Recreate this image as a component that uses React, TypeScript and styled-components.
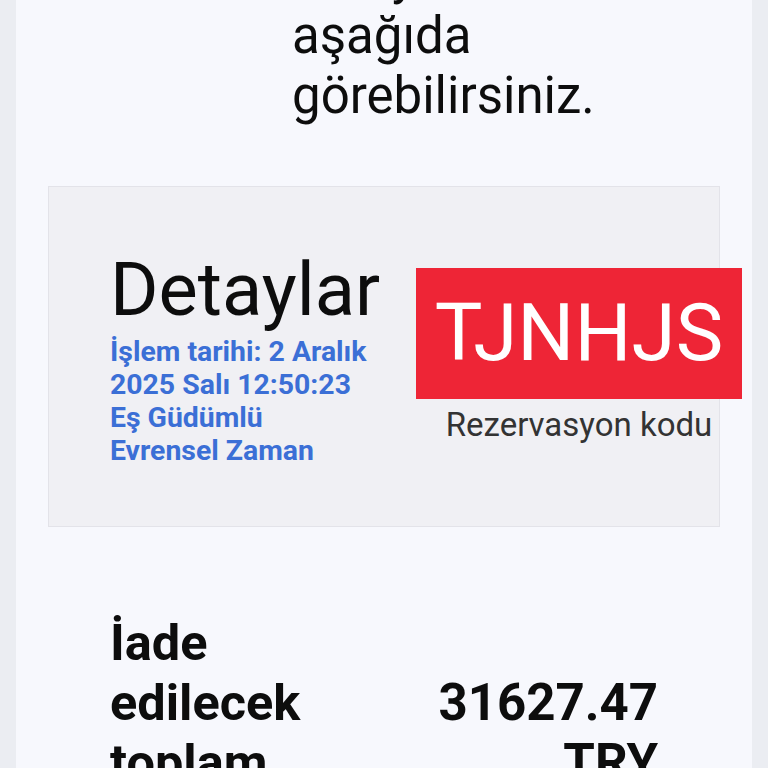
import React from "react";
import styled, { createGlobalStyle } from "styled-components";

const GlobalStyle = createGlobalStyle`
  html, body {
    margin: 0;
    padding: 0;
    background: #ebedf2;
    font-family: Roboto, "Noto Sans", "Liberation Sans", sans-serif;
  }
  * { box-sizing: border-box; }
`;

const Panel = styled.main`
  margin: 0 16px;
  min-height: 100vh;
  background: #f7f8fd;
  display: flow-root;
`;

const Content = styled.div`
  padding: 0 32px;
  margin-top: -114px;
`;

const Message = styled.p`
  margin: 0;
  padding-left: 244px;
  width: 604px;
  font-size: 51px;
  line-height: 60px;
  font-weight: 400;
  color: #0d0d0d;
`;

const Card = styled.section`
  margin-top: 60px;
  display: flex;
  align-items: center;
  gap: 36px;
  padding: 58px 0 59px 61px;
  background: #f0f0f4;
  border: 1px solid #e3e3e9;
`;

const DetailsBlock = styled.div`
  width: 270px;
  flex-shrink: 0;
`;

const DetailsTitle = styled.h2`
  margin: 0;
  font-size: 74px;
  line-height: 90px;
  font-weight: 400;
  color: #0d0d0d;
`;

const DateLine = styled.span`
  display: block;
  font-size: 28.4px;
  line-height: 33px;
  font-weight: 700;
  color: #3b6fd6;
  white-space: nowrap;
`;

const CodeBlock = styled.div`
  flex-shrink: 0;
  width: 326px;
  display: flex;
  flex-direction: column;
  align-items: center;
`;

const CodeBox = styled.div`
  width: 100%;
  height: 131px;
  background: #ee2536;
  color: #ffffff;
  font-size: 80px;
  line-height: 131px;
  text-align: center;
  font-weight: 400;
`;

const CodeLabel = styled.div`
  margin-top: 6px;
  font-size: 33px;
  line-height: 40px;
  color: #333333;
  text-align: center;
`;

const TotalRow = styled.section`
  margin-top: 86px;
  padding: 0 62px;
  display: grid;
  grid-template-columns: 1fr 1fr;
  column-gap: 20px;
  align-items: center;
`;

const TotalLabel = styled.div`
  font-size: 50.5px;
  line-height: 60px;
  font-weight: 700;
  color: #0d0d0d;
`;

const TotalAmount = styled.div`
  font-size: 51px;
  line-height: 60px;
  font-weight: 700;
  color: #0d0d0d;
  text-align: right;
`;

const dateLines = [
  "İşlem tarihi: 2 Aralık",
  "2025 Salı 12:50:23",
  "Eş Güdümlü",
  "Evrensel Zaman",
];

export default function App() {
  return (
    <>
      <GlobalStyle />
      <Panel>
        <Content>
          <Message>İade işleminizin detaylarını aşağıda görebilirsiniz.</Message>
          <Card>
            <DetailsBlock>
              <DetailsTitle>Detaylar</DetailsTitle>
              {dateLines.map((l) => (
                <DateLine key={l}>{l}</DateLine>
              ))}
            </DetailsBlock>
            <CodeBlock>
              <CodeBox>TJNHJS</CodeBox>
              <CodeLabel>Rezervasyon kodu</CodeLabel>
            </CodeBlock>
          </Card>
          <TotalRow>
            <TotalLabel>İade edilecek toplam tutar</TotalLabel>
            <TotalAmount>31627.47 TRY</TotalAmount>
          </TotalRow>
        </Content>
      </Panel>
    </>
  );
}
